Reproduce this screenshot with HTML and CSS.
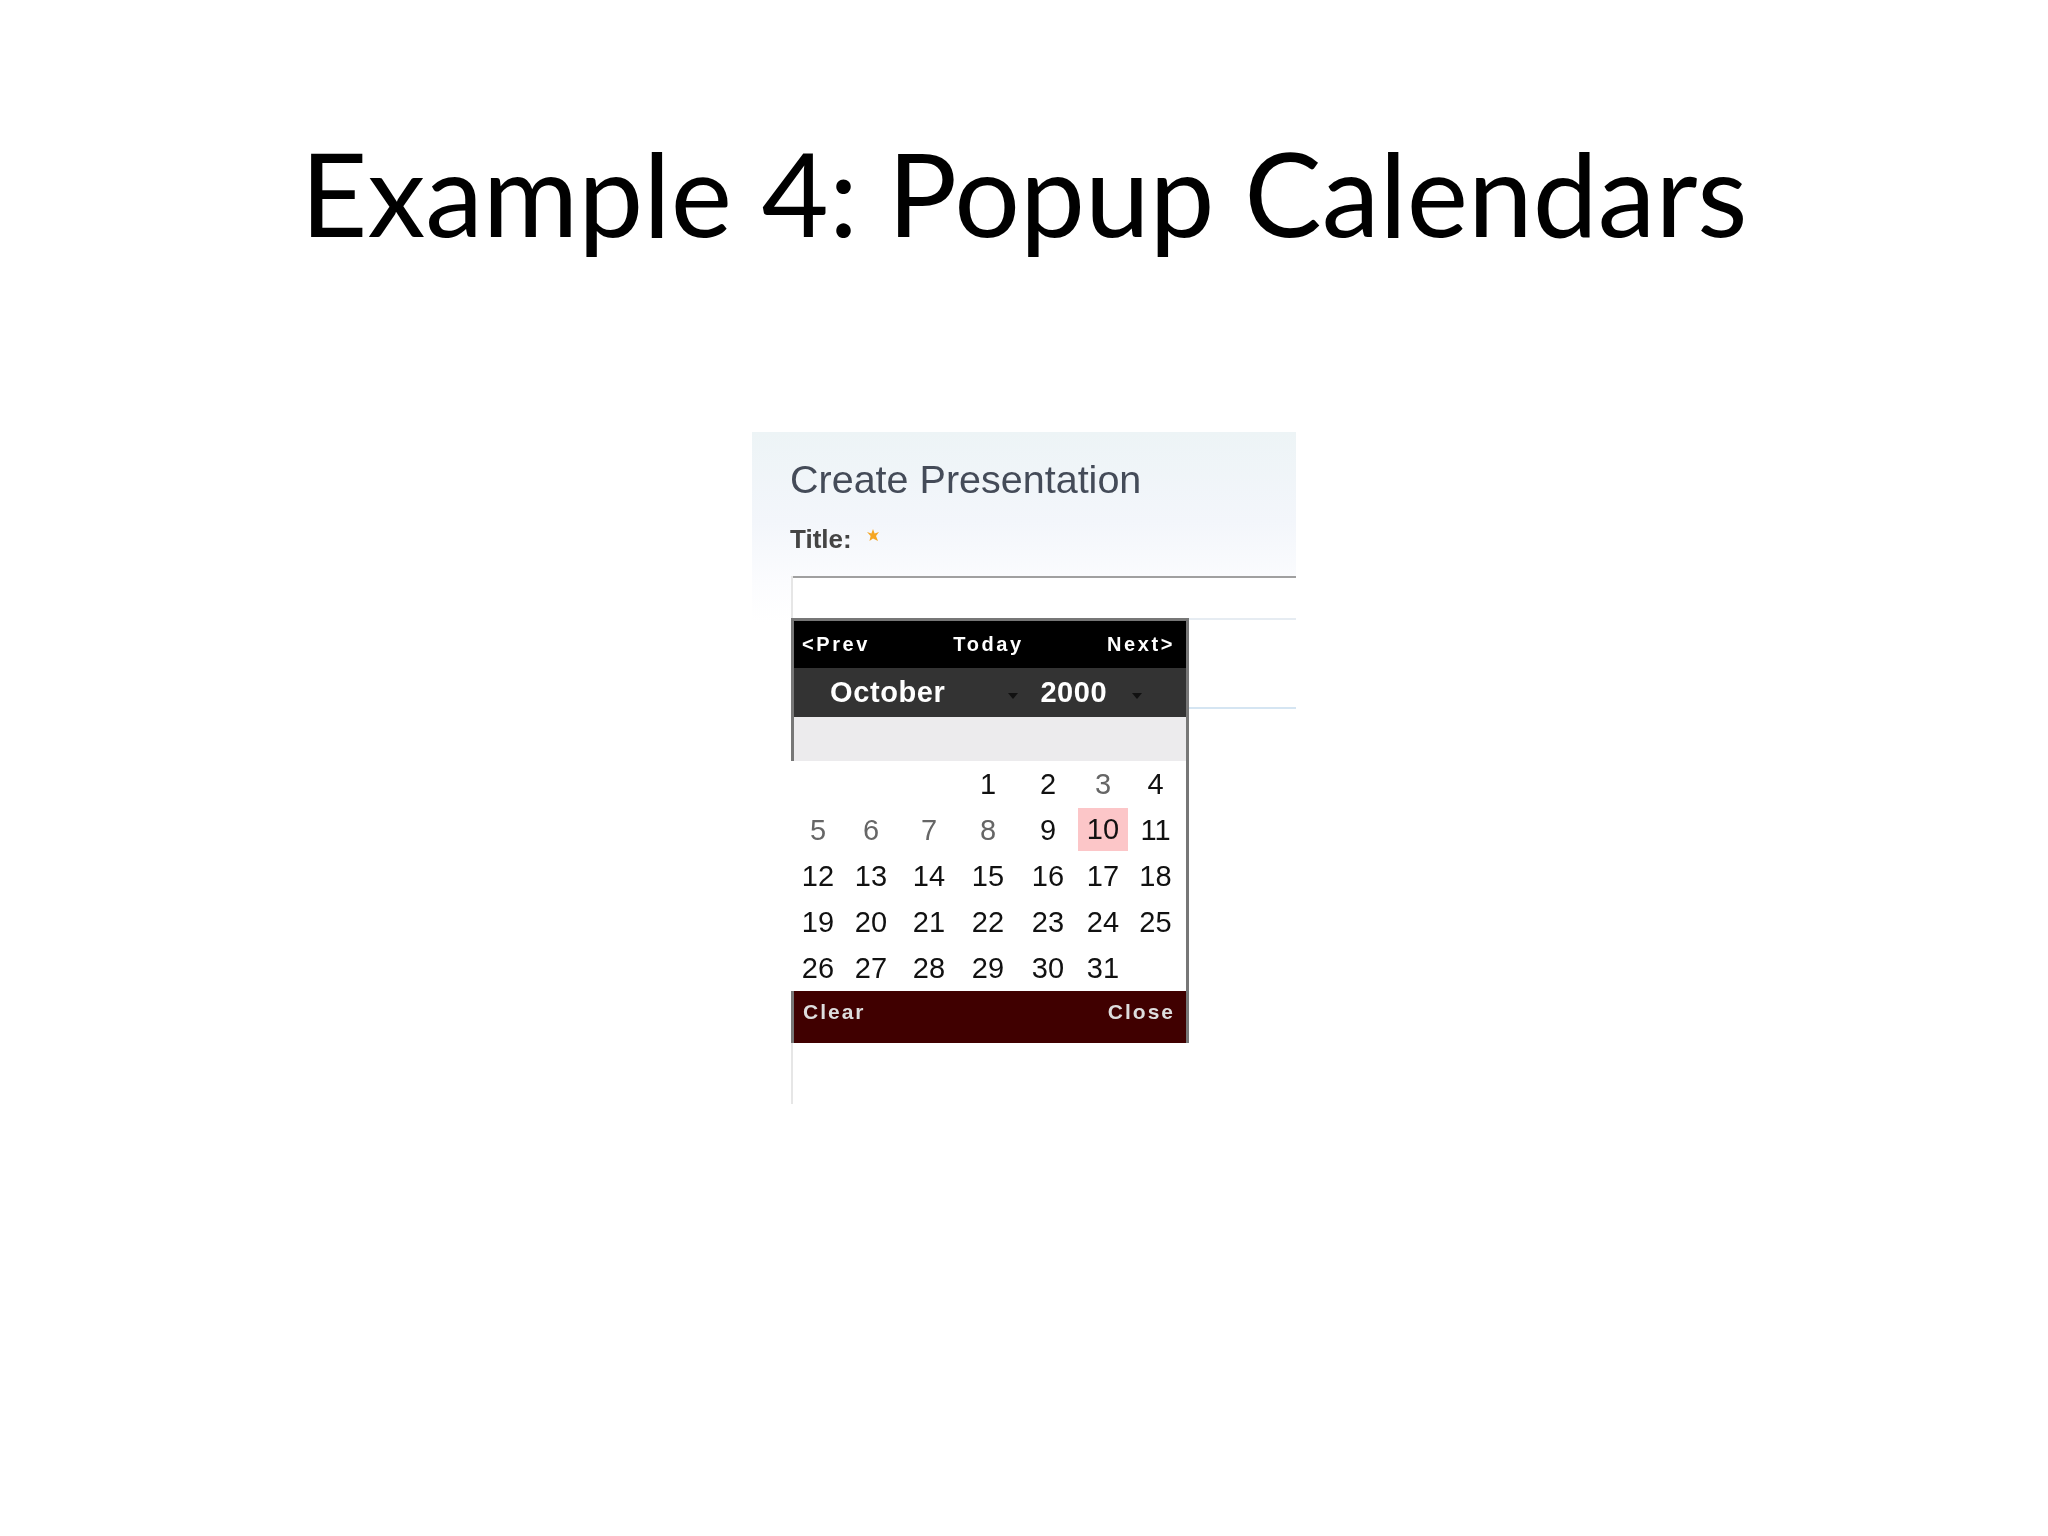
FILE: index.html
```html
<!DOCTYPE html>
<html lang="en">
<head>
<meta charset="utf-8">
<title>Example 4: Popup Calendars</title>
<link rel="stylesheet" href="styles.css">
</head>
<body>
<main class="slide">
  <h1 class="slide-title">Example 4: Popup Calendars</h1>
  <section class="shot">
    <h2 class="shot-heading">Create Presentation</h2>
    <div class="field-label">Title: <svg class="star" viewBox="0 0 16 16" width="16" height="16"><path d="M8 1l1.6 4.4L14 4 11 8l2 5-5-2.6L4.500 13 5.600 8 2 4l4.400 1.400z" fill="#f5a623"/></svg></div>
    <div class="fields">
      <div class="input"></div>
      <div class="textarea"></div>
    </div>
    <div class="calendar">
      <div class="cal-nav">
        <span>&lt;Prev</span><span>Today</span><span>Next&gt;</span>
      </div>
      <div class="cal-month">
        <span class="cal-name">October</span>
        <span class="cal-arrow cal-arrow-month"></span>
        <span class="cal-name">2000</span>
        <span class="cal-arrow cal-arrow-year"></span>
      </div>
      <div class="cal-weekdays"></div>
      <div class="cal-days">
        <span></span><span></span><span></span><span>1</span><span>2</span><span class="faint">3</span><span>4</span>
        <span class="faint">5</span><span class="faint">6</span><span class="faint">7</span><span class="faint">8</span><span>9</span><span class="today">10</span><span>11</span>
        <span>12</span><span>13</span><span>14</span><span>15</span><span>16</span><span>17</span><span>18</span>
        <span>19</span><span>20</span><span>21</span><span>22</span><span>23</span><span>24</span><span>25</span>
        <span>26</span><span>27</span><span>28</span><span>29</span><span>30</span><span>31</span><span></span>
      </div>
      <div class="cal-foot"><span>Clear</span><span>Close</span></div>
    </div>
  </section>
</main>
</body>
</html>
```
FILE: styles.css
```css
* { box-sizing: border-box; }
html, body { margin: 0; padding: 0; background: #fff; }
.slide {
  width: 2048px;
  height: 1536px;
  display: flex;
  flex-direction: column;
  align-items: center;
  overflow: hidden;
}
.slide-title {
  margin: 0;
  height: 432px;
  padding-top: 123px;
  font-family: Lato, "Open Sans", sans-serif;
  font-weight: 400;
  font-size: 116px;
  line-height: 140px;
  color: #000;
  white-space: nowrap;
}
.shot {
  position: relative;
  width: 544px;
  height: 672px;
  padding-top: 24px;
  font-family: "Liberation Sans", Arial, sans-serif;
  background: linear-gradient(#edf4f6 0, #f3f6fb 90px, #fbfcfe 150px, #fff 190px);
  filter: blur(0.6px);
}
.shot-heading {
  margin: 0 0 0 38px;
  font-weight: 400;
  font-size: 39.5px;
  line-height: 46px;
  color: #444b58;
  white-space: nowrap;
}
.field-label {
  margin: 22px 0 0 38px;
  height: 52px;
  font-weight: 700;
  font-size: 26px;
  line-height: 30px;
  color: #444;
}
.star { margin-left: 6px; vertical-align: 4px; }
.fields {
  margin-left: 39px;
  border-left: 2px solid #e6e6e6;
  height: 528px;
  background: #fff;
}
.input {
  height: 44px;
  border-top: 2px solid #a0a0a0;
  border-bottom: 2px solid #e6ecf2;
}
.textarea {
  height: 89px;
  border-bottom: 2px solid #d5e5f2;
}
.calendar {
  position: absolute;
  left: 39px;
  top: 186px;
  width: 398px;
  font-weight: 700;
  color: #fff;
}
.cal-nav {
  height: 50px;
  background: #000;
  border: 3px solid #777;
  border-bottom: 0;
  padding: 0 11px 0 8px;
  display: flex;
  justify-content: space-between;
  align-items: center;
  font-size: 20px;
  letter-spacing: 2.6px;
}
.cal-month {
  height: 49px;
  background: #333;
  border-left: 3px solid #777;
  border-right: 3px solid #777;
  display: flex;
  align-items: center;
  padding-left: 36px;
  font-size: 29px;
}
.cal-name { letter-spacing: 0.6px; }
.cal-arrow {
  width: 0;
  height: 0;
  margin-top: 6px;
  border-left: 5px solid transparent;
  border-right: 5px solid transparent;
  border-top: 6px solid #111;
}
.cal-arrow-month { margin-left: 63px; margin-right: 22px; }
.cal-arrow-year { margin-left: 25px; }
.cal-weekdays {
  height: 44px;
  background: #ecebed;
  border-left: 3px solid #777;
  border-right: 3px solid #777;
}
.cal-days {
  display: grid;
  grid-template-columns: 48px 58px 58px 60px 60px 50px 55px;
  grid-auto-rows: 46px;
  padding-left: 3px;
  border-right: 3px solid #777;
  background: #fff;
  font-weight: 400;
  font-size: 29px;
  color: #111;
}
.cal-days span {
  display: flex;
  align-items: center;
  justify-content: center;
}
.cal-days .faint { color: #666; }
.cal-days .today {
  background: #fcc6c8;
  margin: 1px 0 2px;
}
.cal-foot {
  height: 52px;
  background: #400000;
  border-left: 3px solid #777;
  border-right: 3px solid #777;
  padding: 8px 11px 0 9px;
  display: flex;
  justify-content: space-between;
  align-items: flex-start;
  font-size: 21px;
  line-height: 26px;
  letter-spacing: 2px;
  color: #ddd;
}
```
